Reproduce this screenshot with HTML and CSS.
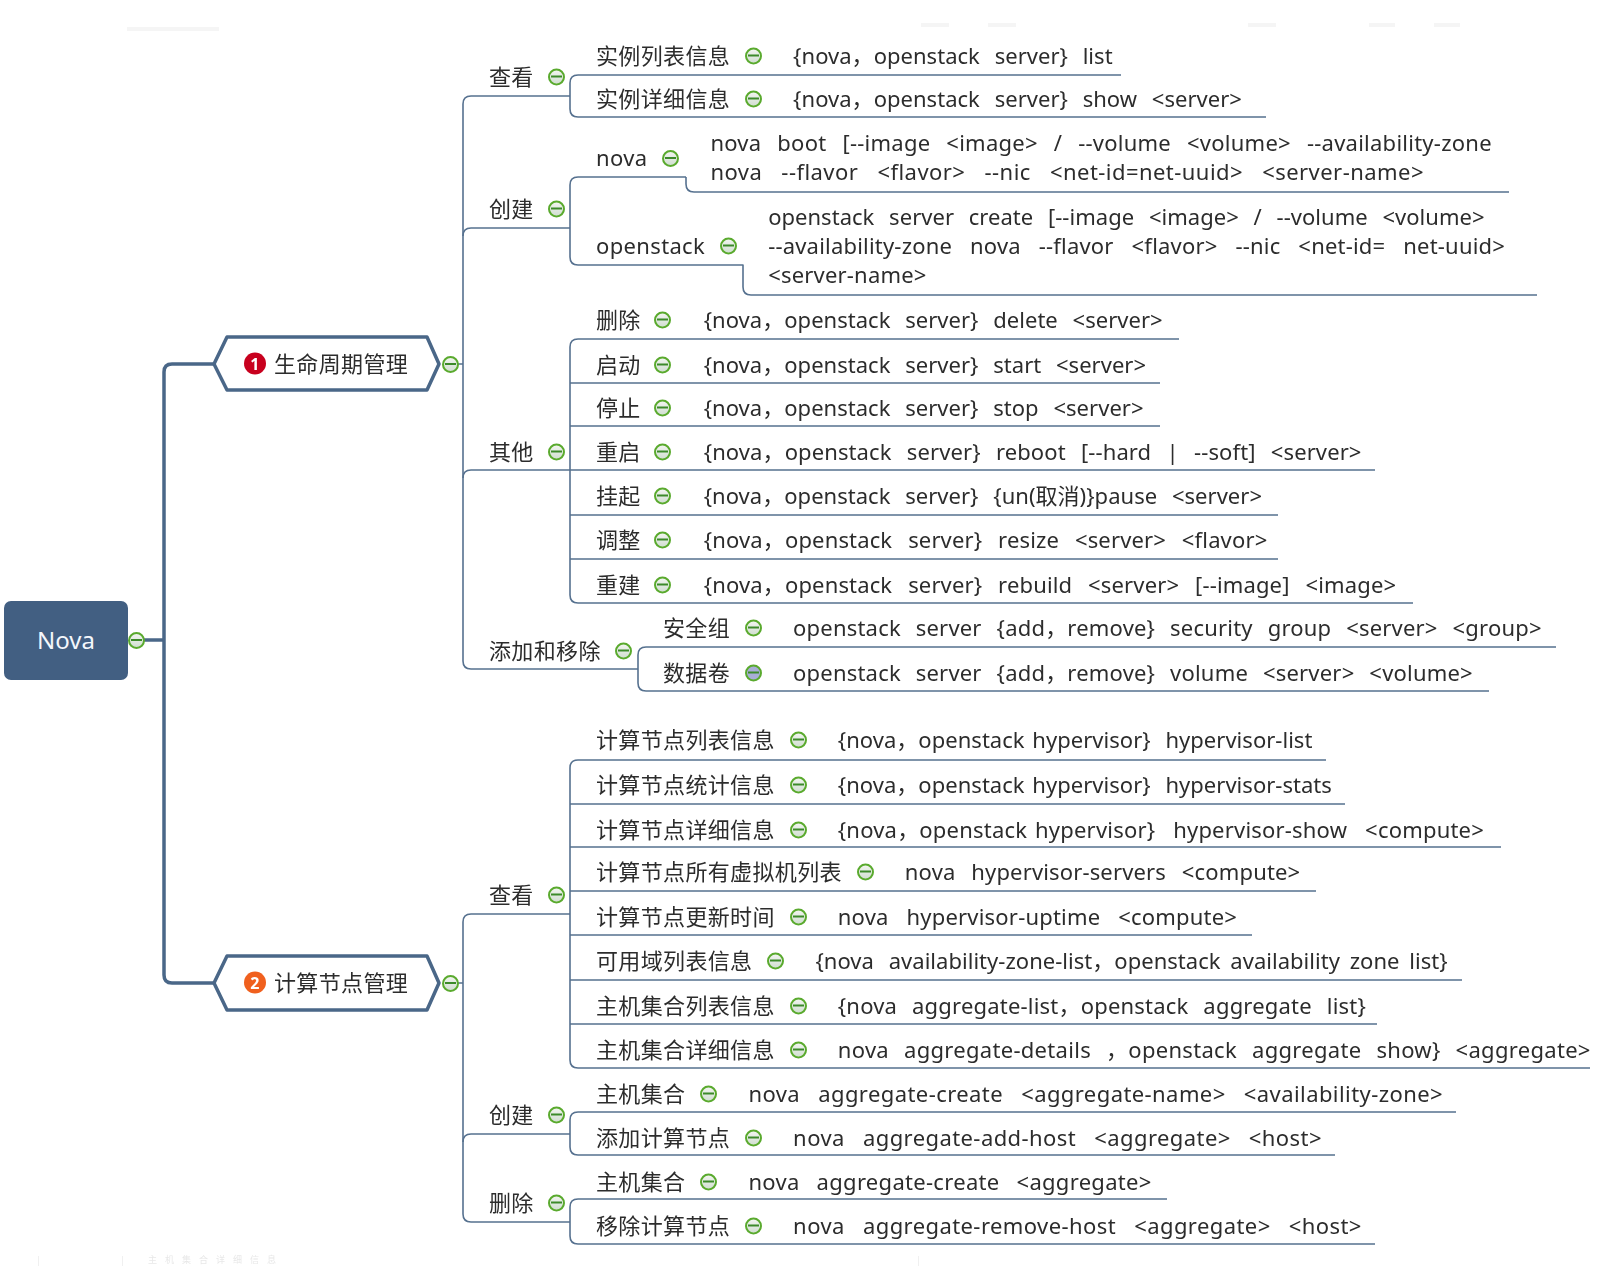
FILE: index.html
```html
<!DOCTYPE html>
<html lang="zh-CN">
<head>
<meta charset="utf-8">
<title>Nova</title>
<link rel="stylesheet" href="styles.css">
</head>
<body>
<main class="map">
  <div class="ghost-top"><i class="g g1"></i><i class="g g2"></i><i class="g g3"></i><i class="g g4"></i><i class="g g5"></i><i class="g g6"></i></div>
  <svg class="links" width="1614" height="1266" viewBox="0 0 1614 1266" aria-hidden="true">
    <g class="thick">
      <path d="M140 640H164"/>
      <path d="M213 364H172Q164 364 164 372V975Q164 983 172 983H213"/>
      <path d="M214 364L227 337H427L439 364L427 390H227Z" class="hex"/>
      <path d="M214 983L227 956H427L439 983L427 1010H227Z" class="hex"/>
    </g>
    <g class="thin">
      <path d="M458 364H463M570 96H471Q463 96 463 104V661Q463 669 471 669H638"/>
      <path d="M463 236Q463 228 471 228H570M463 478Q463 470 471 470H570"/>
      <path d="M1121 75H578Q570 75 570 83V109Q570 117 578 117H1266"/>
      <path d="M686 177H578Q570 177 570 185V257Q570 265 578 265H743V287Q743 295 751 295H1537"/>
      <path d="M686 177V184Q686 192 694 192H1509"/>
      <path d="M1179 339H578Q570 339 570 347V595Q570 603 578 603H1413"/>
      <path d="M570 383H1160M570 426H1160M570 470H1375M570 515H1278M570 559H1278"/>
      <path d="M1556 647H646Q638 647 638 655V683Q638 691 646 691H1489"/>
      <path d="M458 983H463M570 914H471Q463 914 463 922V1214Q463 1222 471 1222H570"/>
      <path d="M463 1142Q463 1134 471 1134H570"/>
      <path d="M1326 760H578Q570 760 570 768V1060Q570 1068 578 1068H1590"/>
      <path d="M570 804H1345M570 847H1501M570 891H1316M570 935H1252M570 980H1462M570 1024H1377"/>
      <path d="M1456 1112H578Q570 1112 570 1120V1147Q570 1155 578 1155H1335"/>
      <path d="M1167 1199H578Q570 1199 570 1207V1236Q570 1244 578 1244H1375"/>
    </g>
  </svg>

  <div class="root">Nova</div>
  <i class="toggle t-root"></i>

  <div class="node main y364"><b class="badge red">1</b><span>生命周期管理</span></div>
  <i class="toggle t-main y364"></i>
  <div class="node main y983"><b class="badge orange">2</b><span>计算节点管理</span></div>
  <i class="toggle t-main y983"></i>

  <div class="node l2 y77"><span>查看</span><i class="toggle"></i></div>
  <div class="node l2 y209"><span>创建</span><i class="toggle"></i></div>
  <div class="node l2 y452"><span>其他</span><i class="toggle"></i></div>
  <div class="node l2 y651"><span>添加和移除</span><i class="toggle"></i></div>
  <div class="node l2 y895"><span>查看</span><i class="toggle"></i></div>
  <div class="node l2 y1115"><span>创建</span><i class="toggle"></i></div>
  <div class="node l2 y1203"><span>删除</span><i class="toggle"></i></div>

  <div class="node l3 y56"><span>实例列表信息</span><i class="toggle"></i><span class="cmd">{nova，openstack server} list</span></div>
  <div class="node l3 y99"><span>实例详细信息</span><i class="toggle"></i><span class="cmd">{nova，openstack server} show &lt;server&gt;</span></div>

  <div class="node l3 y158"><span>nova</span><i class="toggle"></i><span class="cmd"><span class="line mid2">nova boot [--image &lt;image&gt; / --volume &lt;volume&gt; --availability-zone</span><span class="line wide">nova --flavor &lt;flavor&gt; --nic &lt;net-id=net-uuid&gt; &lt;server-name&gt;</span></span></div>
  <div class="node l3 y246"><span>openstack</span><i class="toggle"></i><span class="cmd"><span class="line">openstack server create [--image &lt;image&gt; / --volume &lt;volume&gt;</span><span class="line big">--availability-zone nova --flavor &lt;flavor&gt; --nic &lt;net-id= net-uuid&gt;</span><span class="line big">&lt;server-name&gt;</span></span></div>

  <div class="node l3 short y320"><span>删除</span><i class="toggle"></i><span class="cmd">{nova，openstack server} delete &lt;server&gt;</span></div>
  <div class="node l3 short y365"><span>启动</span><i class="toggle"></i><span class="cmd">{nova，openstack server} start &lt;server&gt;</span></div>
  <div class="node l3 short y408"><span>停止</span><i class="toggle"></i><span class="cmd">{nova，openstack server} stop &lt;server&gt;</span></div>
  <div class="node l3 short y452"><span>重启</span><i class="toggle"></i><span class="cmd snug">{nova，openstack server} reboot [--hard | --soft] &lt;server&gt;</span></div>
  <div class="node l3 short y496"><span>挂起</span><i class="toggle"></i><span class="cmd">{nova，openstack server} {un(取消)}pause &lt;server&gt;</span></div>
  <div class="node l3 short y540"><span>调整</span><i class="toggle"></i><span class="cmd roomy">{nova，openstack server} resize &lt;server&gt; &lt;flavor&gt;</span></div>
  <div class="node l3 short y585"><span>重建</span><i class="toggle"></i><span class="cmd roomy">{nova，openstack server} rebuild &lt;server&gt; [--image] &lt;image&gt;</span></div>

  <div class="node l3b y628"><span>安全组</span><i class="toggle"></i><span class="cmd mid">openstack server {add，remove} security group &lt;server&gt; &lt;group&gt;</span></div>
  <div class="node l3b y673"><span>数据卷</span><i class="toggle selected"></i><span class="cmd mid">openstack server {add，remove} volume &lt;server&gt; &lt;volume&gt;</span></div>

  <div class="node l3 y740"><span>计算节点列表信息</span><i class="toggle"></i><span class="cmd">{nova，<span class="tight">openstack hypervisor</span>} hypervisor-list</span></div>
  <div class="node l3 y785"><span>计算节点统计信息</span><i class="toggle"></i><span class="cmd">{nova，<span class="tight">openstack hypervisor</span>} hypervisor-stats</span></div>
  <div class="node l3 y830"><span>计算节点详细信息</span><i class="toggle"></i><span class="cmd big">{nova，<span class="tight">openstack hypervisor</span>} hypervisor-show &lt;compute&gt;</span></div>
  <div class="node l3 y872"><span>计算节点所有虚拟机列表</span><i class="toggle"></i><span class="cmd roomy">nova hypervisor-servers &lt;compute&gt;</span></div>
  <div class="node l3 y917"><span>计算节点更新时间</span><i class="toggle"></i><span class="cmd big">nova hypervisor-uptime &lt;compute&gt;</span></div>
  <div class="node l3 y961"><span>可用域列表信息</span><i class="toggle"></i><span class="cmd">{nova availability-zone-list，<span class="tight loose">openstack availability zone list</span>}</span></div>
  <div class="node l3 y1006"><span>主机集合列表信息</span><i class="toggle"></i><span class="cmd mid">{nova aggregate-list，openstack aggregate list}</span></div>
  <div class="node l3 y1050"><span>主机集合详细信息</span><i class="toggle"></i><span class="cmd agg">nova aggregate-details ，openstack aggregate show} &lt;aggregate&gt;</span></div>

  <div class="node l3 y1094"><span>主机集合</span><i class="toggle"></i><span class="cmd agg2">nova aggregate-create &lt;aggregate-name&gt; &lt;availability-zone&gt;</span></div>
  <div class="node l3 y1138"><span>添加计算节点</span><i class="toggle"></i><span class="cmd agg2">nova aggregate-add-host &lt;aggregate&gt; &lt;host&gt;</span></div>
  <div class="node l3 y1182"><span>主机集合</span><i class="toggle"></i><span class="cmd agg3">nova aggregate-create &lt;aggregate&gt;</span></div>
  <div class="node l3 y1226"><span>移除计算节点</span><i class="toggle"></i><span class="cmd agg2">nova aggregate-remove-host &lt;aggregate&gt; &lt;host&gt;</span></div>

  <div class="ghost-bottom"><i class="rule r1"></i><i class="rule r2"></i><span>主机集合详细信息</span><i class="rule r3"></i></div>
</main>
</body>
</html>
```

FILE: styles.css
```css
* { box-sizing: border-box; }
html, body { margin: 0; background: #fff; }
body { width: 1614px; height: 1266px; overflow: hidden; }

.map {
  position: relative;
  width: 1614px;
  height: 1266px;
  overflow: hidden;
  color: #2c2c2c;
  font-family: "Noto Sans", "Noto Sans CJK SC", sans-serif;
  font-size: 22px;
  line-height: 29px;
  filter: blur(0.45px);
}

.links { position: absolute; inset: 0; fill: none; stroke-linejoin: round; }
.thick { stroke: #4a6788; stroke-width: 3.5; }
.thick .hex { fill: #fff; }
.thin { stroke: #56718f; stroke-width: 1.6; }

.root {
  position: absolute;
  left: 4px;
  top: 601px;
  width: 124px;
  height: 79px;
  padding-bottom: 2px;
  border-radius: 7px;
  background: #425f82;
  color: #f4f7fb;
  font-size: 24px;
  display: flex;
  align-items: center;
  justify-content: center;
}

.node {
  position: absolute;
  display: flex;
  align-items: center;
  margin-top: -1px;
  white-space: pre;
  letter-spacing: 0.35px;
  transform: translateY(-50%);
}
.main { left: 244px; }
.main .badge { margin-right: 8px; }
.l2 { left: 489px; gap: 14px; }
.l3 { left: 596px; gap: 15px; }
.l3b { left: 663px; gap: 15px; }
.short .toggle { margin: 0 2px 0 -2px; }

.cmd { margin-left: 16px; letter-spacing: 0.03px; word-spacing: 9px; }
.line { display: block; }
.tight { word-spacing: 2px; }
.tight.loose { word-spacing: 4px; }
.snug { word-spacing: 9.5px; letter-spacing: 0.1px; }
.mid { word-spacing: 9px; letter-spacing: 0.2px; }
.mid2 { word-spacing: 10px; letter-spacing: 0.25px; }
.roomy { word-spacing: 10px; letter-spacing: 0.15px; }
.big { word-spacing: 12px; letter-spacing: 0.2px; }
.wide { word-spacing: 13px; letter-spacing: 0.45px; }
.agg { word-spacing: 9px; letter-spacing: 0.3px; }
.agg2 { word-spacing: 12px; letter-spacing: 0.42px; }
.agg3 { word-spacing: 11px; letter-spacing: 0.3px; }

.badge {
  width: 22px;
  height: 22px;
  border-radius: 50%;
  color: #fff;
  font-size: 16px;
  line-height: 22px;
  font-weight: 700;
  text-align: center;
}
.red { background: #c8001e; }
.orange { background: #f0601e; }

.toggle {
  display: block;
  flex: none;
  width: 17px;
  height: 17px;
  border: 2px solid #5aaa2e;
  border-radius: 50%;
  background: linear-gradient(#f1f4ef, #d2dfd2);
  position: relative;
  top: 1px;
}
.toggle::after {
  content: "";
  position: absolute;
  left: 1px;
  right: 1px;
  top: 5px;
  height: 2px;
  background: #3c8a2a;
}
.toggle.selected { background: #a8aed6; }
.t-root { position: absolute; left: 128px; top: 632px; }
.t-main { position: absolute; left: 442px; margin-top: -8px; }

.y56 { top: 56px; } .y77 { top: 77px; } .y99 { top: 99px; } .y158 { top: 158px; }
.y209 { top: 209px; } .y246 { top: 246px; } .y320 { top: 320px; } .y364 { top: 364px; }
.y365 { top: 365px; } .y408 { top: 408px; } .y452 { top: 452px; } .y496 { top: 496px; }
.y540 { top: 540px; } .y585 { top: 585px; } .y628 { top: 628px; } .y651 { top: 651px; }
.y673 { top: 673px; } .y740 { top: 740px; } .y785 { top: 785px; } .y830 { top: 830px; }
.y872 { top: 872px; } .y895 { top: 895px; } .y917 { top: 917px; } .y961 { top: 961px; }
.y983 { top: 983px; } .y1006 { top: 1006px; } .y1050 { top: 1050px; } .y1094 { top: 1094px; }
.y1115 { top: 1115px; } .y1138 { top: 1138px; } .y1182 { top: 1182px; } .y1203 { top: 1203px; }
.y1226 { top: 1226px; }

.ghost-top { position: absolute; left: 0; top: 23px; width: 100%; height: 8px; }
.g { position: absolute; height: 4px; background: #f5f5f5; }
.g1 { left: 127px; top: 4px; width: 92px; }
.g2 { left: 921px; top: 0; width: 28px; }
.g3 { left: 988px; top: 0; width: 28px; }
.g4 { left: 1248px; top: 0; width: 28px; }
.g5 { left: 1369px; top: 0; width: 26px; }
.g6 { left: 1434px; top: 0; width: 26px; }

.ghost-bottom {
  position: absolute;
  left: 0;
  top: 1254px;
  width: 100%;
  height: 12px;
  color: #e8e8e8;
  font-size: 9px;
  line-height: 12px;
  letter-spacing: 8px;
}
.ghost-bottom span { position: absolute; left: 148px; top: 0; }
.rule { position: absolute; top: 2px; width: 1px; height: 10px; background: #f0f0f0; }
.r1 { left: 38px; } .r2 { left: 122px; } .r3 { left: 918px; }
```
